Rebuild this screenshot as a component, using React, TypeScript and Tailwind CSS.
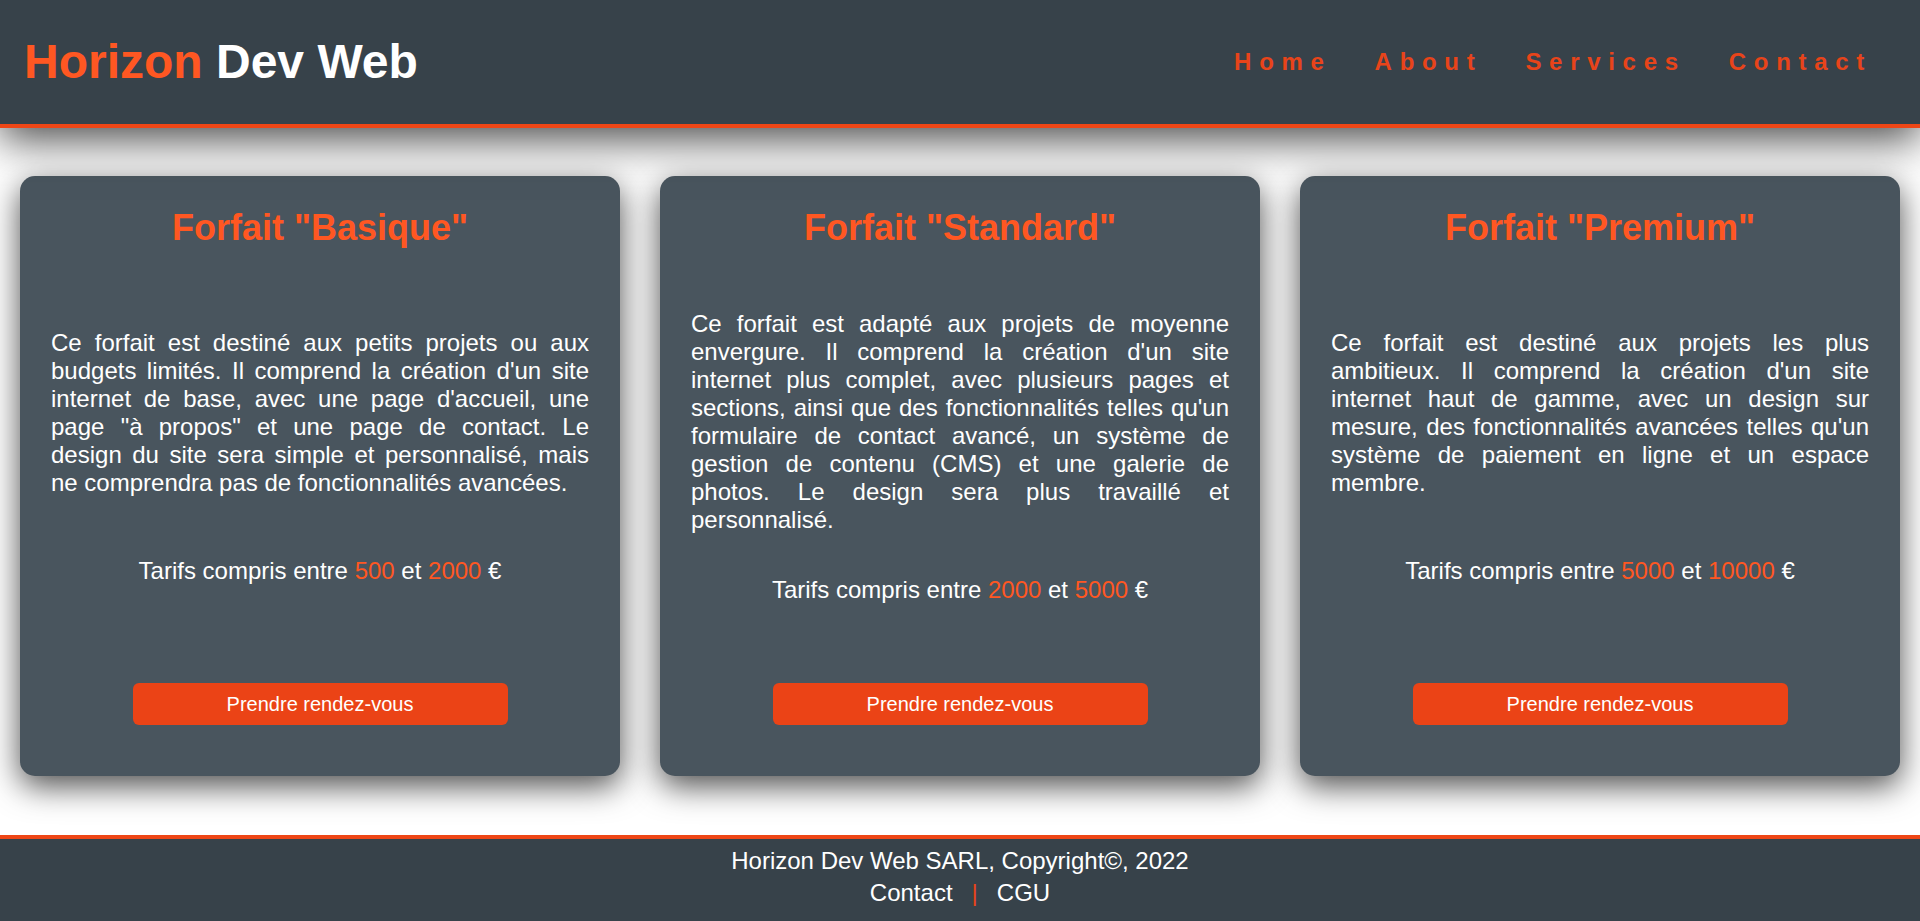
import React from "react";

type Plan = {
  title: string;
  text: string;
  min: string;
  max: string;
};

const plans: Plan[] = [
  {
    title: 'Forfait "Basique"',
    text:
      "Ce forfait est destiné aux petits projets ou aux budgets limités. Il comprend la création d'un site internet de base, avec une page d'accueil, une page \"à propos\" et une page de contact. Le design du site sera simple et personnalisé, mais ne comprendra pas de fonctionnalités avancées.",
    min: "500",
    max: "2000",
  },
  {
    title: 'Forfait "Standard"',
    text:
      "Ce forfait est adapté aux projets de moyenne envergure. Il comprend la création d'un site internet plus complet, avec plusieurs pages et sections, ainsi que des fonctionnalités telles qu'un formulaire de contact avancé, un système de gestion de contenu (CMS) et une galerie de photos. Le design sera plus travaillé et personnalisé.",
    min: "2000",
    max: "5000",
  },
  {
    title: 'Forfait "Premium"',
    text:
      "Ce forfait est destiné aux projets les plus ambitieux. Il comprend la création d'un site internet haut de gamme, avec un design sur mesure, des fonctionnalités avancées telles qu'un système de paiement en ligne et un espace membre.",
    min: "5000",
    max: "10000",
  },
];

function Card({ plan }: { plan: Plan }) {
  return (
    <div className="flex h-[600px] w-[600px] flex-col justify-between rounded-[15px] bg-[#49555e] px-[31px] pb-[51px] pt-[31px] shadow-[0_10px_32px_rgba(0,0,0,0.7)]">
      <h2 className="mb-[21px] text-center text-[36px] font-bold leading-[41px] text-[#ff5722]">
        {plan.title}
      </h2>
      <p className="text-justify text-[24px] leading-[28px] text-white">{plan.text}</p>
      <p className="mb-[38px] text-center text-[24px] leading-[27.6px] text-white">
        Tarifs compris entre <span className="text-[#ff5722]">{plan.min}</span> et{" "}
        <span className="text-[#ff5722]">{plan.max}</span> €
      </p>
      <div className="flex justify-center">
        <button className="h-[42px] w-[375px] rounded-[6px] bg-[#eb4316] text-[20px] text-white">
          Prendre rendez-vous
        </button>
      </div>
    </div>
  );
}

export default function App() {
  return (
    <div className="min-h-screen bg-white font-['Liberation_Sans',Arial,sans-serif]">
      <header className="relative z-10 flex h-[128px] items-center justify-between border-b-[4px] border-[#ee4616] bg-[#37424a] pl-[24px] pr-[48px] shadow-[0_12px_40px_rgba(0,0,0,0.7)]">
        <h1 className="text-[48px] font-bold leading-none">
          <span className="text-[#ff5722]">Horizon</span> <span className="text-white">Dev Web</span>
        </h1>
        <nav className="flex gap-[43px] text-[24px] font-bold tracking-[7.7px] text-[#e8441a]">
          <a>Home</a>
          <a>About</a>
          <a>Services</a>
          <a>Contact</a>
        </nav>
      </header>
      <main className="flex gap-[40px] px-[20px] pb-[59px] pt-[48px]">
        {plans.map((p) => (
          <Card key={p.title} plan={p} />
        ))}
      </main>
      <footer className="border-t-[4px] border-[#ee4616] bg-[#37424a] pb-[15px] pt-[8px] text-center text-[24px] leading-[27.6px] text-white">
        <p>Horizon Dev Web SARL, Copyright©, 2022</p>
        <div className="mt-[4px]">
          <a>Contact</a>
          <span className="mx-[19px] text-[#e8441a]">|</span>
          <a>CGU</a>
        </div>
      </footer>
    </div>
  );
}
